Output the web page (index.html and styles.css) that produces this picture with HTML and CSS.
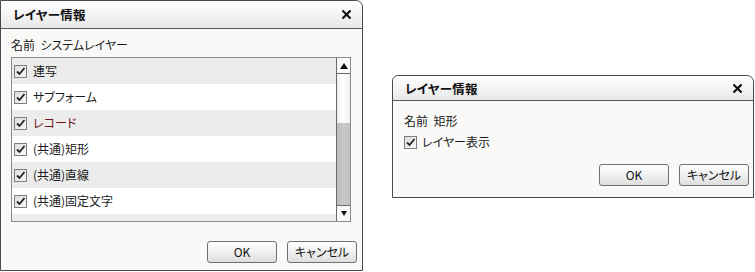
FILE: index.html
```html
<!DOCTYPE html>
<html lang="ja">
<head>
<meta charset="utf-8">
<title>レイヤー情報</title>
<link rel="stylesheet" href="styles.css">
</head>
<body>
<div class="page">
  <div class="dialog d1">
    <div class="titlebar">
      <span class="title">レイヤー情報</span>
      <svg class="close" width="9" height="9" viewBox="0 0 9 9"><path d="M1.2 1.2 L7.8 7.8 M7.8 1.2 L1.2 7.8" stroke="#111" stroke-width="2.2" stroke-linecap="square"/></svg>
    </div>
    <div class="body">
      <div class="label">名前&nbsp;&nbsp;システムレイヤー</div>
      <div class="list">
        <div class="rows">
          <div class="row alt"><span class="cb"><svg width="11" height="11" viewBox="0 0 11 11"><path d="M2 5.5 L4.5 8 L9.5 2" fill="none" stroke="#222" stroke-width="1.8"/></svg></span><span class="txt">連写</span></div>
          <div class="row"><span class="cb"><svg width="11" height="11" viewBox="0 0 11 11"><path d="M2 5.5 L4.5 8 L9.5 2" fill="none" stroke="#222" stroke-width="1.8"/></svg></span><span class="txt">サブフォーム</span></div>
          <div class="row alt"><span class="cb"><svg width="11" height="11" viewBox="0 0 11 11"><path d="M2 5.5 L4.5 8 L9.5 2" fill="none" stroke="#222" stroke-width="1.8"/></svg></span><span class="txt red">レコード</span></div>
          <div class="row"><span class="cb"><svg width="11" height="11" viewBox="0 0 11 11"><path d="M2 5.5 L4.5 8 L9.5 2" fill="none" stroke="#222" stroke-width="1.8"/></svg></span><span class="txt">(共通)矩形</span></div>
          <div class="row alt"><span class="cb"><svg width="11" height="11" viewBox="0 0 11 11"><path d="M2 5.5 L4.5 8 L9.5 2" fill="none" stroke="#222" stroke-width="1.8"/></svg></span><span class="txt">(共通)直線</span></div>
          <div class="row"><span class="cb"><svg width="11" height="11" viewBox="0 0 11 11"><path d="M2 5.5 L4.5 8 L9.5 2" fill="none" stroke="#222" stroke-width="1.8"/></svg></span><span class="txt">(共通)固定文字</span></div>
          <div class="row alt"><span class="cb"><svg width="11" height="11" viewBox="0 0 11 11"><path d="M2 5.5 L4.5 8 L9.5 2" fill="none" stroke="#222" stroke-width="1.8"/></svg></span></div>
        </div>
        <div class="scrollbar">
          <div class="sbtn up"><span class="tri-up"></span></div>
          <div class="track"></div>
          <div class="thumb"></div>
          <div class="sbtn down"><span class="tri-down"></span></div>
        </div>
      </div>
    </div>
    <div class="footer f1">
      <button class="btn">OK</button>
      <button class="btn">キャンセル</button>
    </div>
  </div>

  <div class="dialog d2">
    <div class="titlebar t2">
      <span class="title">レイヤー情報</span>
      <svg class="close" width="9" height="9" viewBox="0 0 9 9"><path d="M1.2 1.2 L7.8 7.8 M7.8 1.2 L1.2 7.8" stroke="#111" stroke-width="2.2" stroke-linecap="square"/></svg>
    </div>
    <div class="body b2">
      <div class="label l2">名前&nbsp;&nbsp;矩形</div>
      <div class="check-line"><span class="cb cb2"><svg width="11" height="11" viewBox="0 0 11 11"><path d="M2 5.5 L4.5 8 L9.5 2" fill="none" stroke="#222" stroke-width="1.8"/></svg></span><span class="txt">レイヤー表示</span></div>
    </div>
    <div class="footer f2">
      <button class="btn">OK</button>
      <button class="btn">キャンセル</button>
    </div>
  </div>
</div>
</body>
</html>
```

FILE: styles.css
```css
html, body {
  margin: 0;
  padding: 0;
  background: #ffffff;
}
body {
  font-family: "Noto Sans CJK JP", "Noto Sans", sans-serif;
  font-size: 12px;
  color: #1a1a1a;
  font-feature-settings: "palt";
}
.page {
  display: flex;
  align-items: flex-start;
  gap: 29px;
  width: 755px;
  height: 272px;
  overflow: hidden;
}
.dialog {
  box-sizing: border-box;
  border: 1px solid #4a4a4a;
  background: #f9f9f7;
  display: flex;
  flex-direction: column;
  flex: none;
}
.d1 {
  width: 363px;
  height: 271px;
  border-radius: 0 7px 0 0;
}
.d2 {
  width: 362px;
  height: 123px;
  margin-top: 75px;
  border-radius: 6px 7px 0 0;
}
.titlebar {
  height: 27px;
  border-bottom: 1px solid #5a5a5a;
  background: linear-gradient(#fefefe, #f4f4f4 50%, #e8e8e8);
  display: flex;
  align-items: center;
  justify-content: space-between;
  padding: 0 11px 0 12px;
  border-radius: inherit;
  flex: none;
}
.t2 {
  box-sizing: content-box;
  height: 23px;
  padding-top: 1px;
}
.title {
  font-weight: bold;
  font-size: 12.5px;
  color: #111;
  letter-spacing: 0.2px;
}
.close {
  display: block;
}
.body {
  padding: 7px 11px 0 10px;
}
.label {
  height: 18px;
  line-height: 18px;
  margin-bottom: 3px;
  color: #1a1a1a;
}
.list {
  height: 165px;
  box-sizing: border-box;
  border: 1px solid #8a8a8a;
  background: #fff;
  display: flex;
  overflow: hidden;
}
.rows {
  flex: 1;
  overflow: hidden;
}
.row {
  height: 26px;
  display: flex;
  align-items: center;
  padding-left: 2px;
  background: #ffffff;
}
.row.alt {
  background: #ececec;
}
.cb {
  box-sizing: border-box;
  width: 13px;
  height: 13px;
  border: 1px solid #7d7d7d;
  background: linear-gradient(135deg, #dedede, #f8f8f8);
  display: flex;
  align-items: center;
  justify-content: center;
  flex: none;
  margin-right: 6px;
}
.cb2 {
  margin-right: 5px;
}
.cb svg {
  display: block;
}
.txt {
  line-height: 16px;
}
.red {
  color: #6e1414;
}
.scrollbar {
  width: 13px;
  border-left: 1px solid #6a6a6a;
  display: flex;
  flex-direction: column;
  flex: none;
  background: #f3f3f3;
}
.sbtn {
  height: 15px;
  display: flex;
  align-items: center;
  justify-content: center;
  background: #fafafa;
  flex: none;
}
.sbtn.up {
  border-bottom: 1px solid #6a6a6a;
}
.sbtn.down {
  border-top: 1px solid #6a6a6a;
}
.tri-up {
  width: 0;
  height: 0;
  border-left: 4px solid transparent;
  border-right: 4px solid transparent;
  border-bottom: 6px solid #111;
}
.tri-down {
  width: 0;
  height: 0;
  border-left: 3.5px solid transparent;
  border-right: 3.5px solid transparent;
  border-top: 5px solid #111;
}
.track {
  height: 49px;
  background: linear-gradient(90deg, #ececec, #ffffff 40%, #f0f0f0);
  flex: none;
}
.thumb {
  flex: 1;
  background: linear-gradient(90deg, #bdbdbd, #c8c8c8 50%, #c0c0c0);
}
.footer {
  display: flex;
  justify-content: flex-end;
  gap: 10px;
}
.f1 {
  margin-top: 19px;
  padding-right: 5px;
}
.btn {
  width: 70px;
  height: 22px;
  box-sizing: border-box;
  border: 1px solid #707070;
  border-radius: 3px;
  background: linear-gradient(#fefefe, #f0f0f0 50%, #dedede);
  font-family: inherit;
  font-size: 12px;
  font-feature-settings: "palt";
  color: #111;
  padding: 0;
  line-height: 18px;
}
.b2 {
  padding: 11px 11px 0 11px;
}
.l2 {
  margin-bottom: 3px;
}
.check-line {
  display: flex;
  align-items: center;
  height: 18px;
}
.f2 {
  margin-top: 13px;
  padding-right: 4px;
}
```
